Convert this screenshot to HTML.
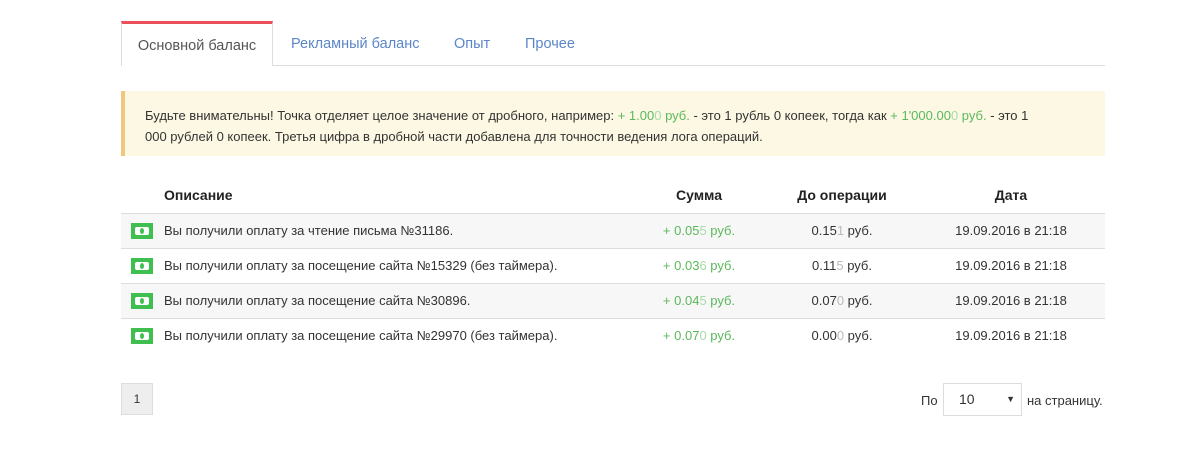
<!DOCTYPE html>
<html><head><meta charset="utf-8"><style>
body{margin:0;background:#fff;font-family:"Liberation Sans","DejaVu Sans",sans-serif;font-size:13px;color:#333;}
.c{position:absolute;left:121px;width:984px;}
.tabs{top:21px;height:44px;border-bottom:1px solid #ddd;}
.tab{position:absolute;top:0;height:44px;line-height:47px;font-size:14.5px;color:#5b86c8;white-space:nowrap}
.tab.a{left:0;width:150px;border-top:3px solid #e9505a;border-left:1px solid #ddd;border-right:1px solid #ddd;background:#fff;height:42px;color:#555;text-align:center;line-height:44px;box-sizing:content-box}
.alert{top:91px;height:65px;background:#fcf8e3;border-left:4px solid #f0c87c;box-sizing:border-box;padding:14px 62px 0 20px;line-height:21px;color:#333;}
.g{color:#5cb85c}.l{color:#a8dba8}.gr{color:#bbb}
.row{position:absolute;left:0;width:984px;height:35px;border-top:1px solid #ddd;box-sizing:border-box;line-height:34px;white-space:nowrap}
.row.s{background:#f7f7f7}
.ic{position:absolute;left:10px;top:9px;width:22px;height:16px;background:#3fbf4f;}
.ic:after{content:"";position:absolute;left:4px;top:4px;width:14px;height:8px;background:#fff;border-radius:2px}
.ic:before{content:"";position:absolute;left:9px;top:5px;width:4px;height:6px;background:#3fbf4f;border-radius:50%;z-index:1}
.d{position:absolute;left:43px}
.m{position:absolute;left:528px;width:100px;text-align:center;white-space:nowrap}
.b{position:absolute;left:671px;width:100px;text-align:center;white-space:nowrap}
.t{position:absolute;left:820px;width:140px;text-align:center;white-space:nowrap}
.h{position:absolute;top:187px;font-weight:bold;font-size:14px;color:#222}
</style></head><body>
<div class="c tabs">
<div class="tab a">Основной баланс</div>
<div class="tab" style="left:170px">Рекламный баланс</div>
<div class="tab" style="left:333px">Опыт</div>
<div class="tab" style="left:404px">Прочее</div>
</div>
<div class="c alert">Будьте внимательны! Точка отделяет целое значение от дробного, например: <span class="g">+ 1.00<span class="l">0</span> руб.</span> - это 1 рубль 0 копеек, тогда как <span class="g">+ 1'000.00<span class="l">0</span> руб.</span> - это 1 000 рублей 0 копеек. Третья цифра в дробной части добавлена для точности ведения лога операций.</div>
<div class="c" style="top:0;height:450px">
<div class="h" style="left:43px">Описание</div>
<div class="h m">Сумма</div>
<div class="h b" style="left:661px;width:120px">До операции</div>
<div class="h t">Дата</div>
<div class="row s" style="top:213px"><div class="ic"></div><div class="d">Вы получили оплату за чтение письма №31186.</div><div class="m g">+ 0.05<span class="l">5</span> руб.</div><div class="b">0.15<span class="gr">1</span> руб.</div><div class="t">19.09.2016 в 21:18</div></div>
<div class="row" style="top:248px"><div class="ic"></div><div class="d">Вы получили оплату за посещение сайта №15329 (без таймера).</div><div class="m g">+ 0.03<span class="l">6</span> руб.</div><div class="b">0.11<span class="gr">5</span> руб.</div><div class="t">19.09.2016 в 21:18</div></div>
<div class="row s" style="top:283px"><div class="ic"></div><div class="d">Вы получили оплату за посещение сайта №30896.</div><div class="m g">+ 0.04<span class="l">5</span> руб.</div><div class="b">0.07<span class="gr">0</span> руб.</div><div class="t">19.09.2016 в 21:18</div></div>
<div class="row" style="top:318px"><div class="ic"></div><div class="d">Вы получили оплату за посещение сайта №29970 (без таймера).</div><div class="m g">+ 0.07<span class="l">0</span> руб.</div><div class="b">0.00<span class="gr">0</span> руб.</div><div class="t">19.09.2016 в 21:18</div></div>
<div style="position:absolute;left:0;top:383px;width:32px;height:32px;background:#eee;border:1px solid #ddd;box-sizing:border-box;text-align:center;line-height:30px;font-size:12px">1</div>
<div style="position:absolute;left:800px;top:383px;line-height:36px">По</div>
<div style="position:absolute;left:822px;top:383px;width:79px;height:33px;border:1px solid #ddd;box-sizing:border-box;line-height:31px;padding-left:15px;font-size:14px">10<span style="position:absolute;right:6px;font-size:9px">▼</span></div>
<div style="position:absolute;left:906px;top:383px;line-height:36px">на страницу.</div>
</div>
</body></html>
